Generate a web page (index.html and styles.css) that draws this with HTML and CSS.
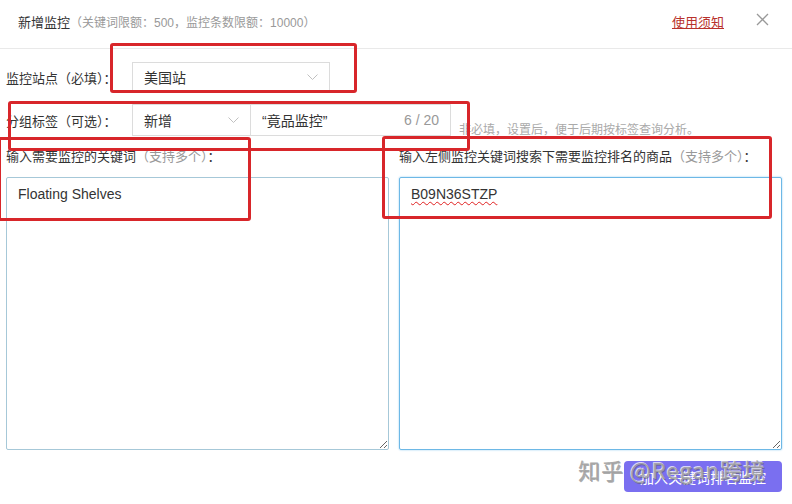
FILE: index.html
```html
<!DOCTYPE html>
<html lang="zh-CN">
<head>
    <meta charset="UTF-8">
    <title>新增监控</title>
    <link rel="stylesheet" href="styles.css">
</head>
<body>
    <div class="dialog">
        <!-- 标题栏 -->
        <div class="dialog-header">
            <div class="title">新增监控<span class="title-sub">（关键词限额：500，监控条数限额：10000）</span></div>
            <a class="notice-link" href="#">使用须知</a>
            <span class="close">
                <svg width="13" height="13" viewBox="0 0 13 13"><path d="M1 1L12 12M12 1L1 12" stroke="#999" stroke-width="1.3" fill="none"/></svg>
            </span>
        </div>

        <div class="dialog-body">
            <div class="form-row">
                <label class="form-label">监控站点（必填）：</label>
                <div class="select select-site">
                    <span>美国站</span>
                    <svg class="chevron" width="11" height="6" viewBox="0 0 11 6"><path d="M0.5 0.5L5.5 5.5L10.5 0.5" stroke="#c0c0c0" fill="none"/></svg>
                </div>
            </div>

            <div class="form-row row-tag">
                <label class="form-label">分组标签（可选）：</label>
                <div class="tag-group">
                    <div class="select select-tag">
                        <span>新增</span>
                        <svg class="chevron" width="11" height="6" viewBox="0 0 11 6"><path d="M0.5 0.5L5.5 5.5L10.5 0.5" stroke="#c0c0c0" fill="none"/></svg>
                    </div>
                    <div class="tag-input">
                        <span>“竟品监控”</span>
                        <span class="count">6 / 20</span>
                    </div>
                </div>
                <span class="hint">非必填，设置后，便于后期按标签查询分析。</span>
            </div>

            <div class="columns">
                <div class="column">
                    <div class="col-label">输入需要监控的关键词<span class="muted">（支持多个）</span>：</div>
                    <div class="text-box">Floating Shelves</div>
                </div>
                <div class="column">
                    <div class="col-label">输入左侧监控关键词搜索下需要监控排名的商品<span class="muted">（支持多个）</span>：</div>
                    <div class="text-box focused"><span class="spell">B09N36STZP</span></div>
                </div>
            </div>

            <div class="footer">
                <button class="btn-submit">加入关键词排名监控</button>
            </div>
        </div>

        <!-- 截图上的标注框和水印 -->
        <div class="mark mark-1"></div>
        <div class="mark mark-2"></div>
        <div class="mark mark-3"></div>
        <div class="mark mark-4"></div>
        <div class="watermark">知乎 @Regan跨境</div>
    </div>
</body>
</html>
```

FILE: styles.css
```css
body {
    margin: 0;
    background-color: #fff;
    font-family: "Liberation Sans", "Noto Sans CJK SC", sans-serif;
    color: #333;
}
.dialog {
    position: relative;
    width: 792px;
    height: 504px;
    overflow: hidden;
}
.dialog-header {
    display: flex;
    align-items: center;
    height: 43px;
    padding: 0 23px 5px 18px;
    border-bottom: 1px solid #e9e9e9;
}
.title {
    flex: 1;
    font-size: 13px;
    color: #333;
}
.title-sub {
    font-size: 12px;
    color: #999;
}
.notice-link {
    font-size: 13px;
    color: #b8322c;
    text-decoration: underline;
    margin-right: 32px;
}
.close {
    display: flex;
    margin-top: -4px;
}
.dialog-body {
    padding: 13px 10px 0 6px;
}
.form-row {
    display: flex;
    align-items: center;
    height: 30px;
}
.form-label {
    width: 126px;
    font-size: 13px;
    color: #333;
}
.select {
    display: flex;
    align-items: center;
    justify-content: space-between;
    box-sizing: border-box;
    height: 100%;
    padding: 0 11px;
    border: 1px solid #dcdcdc;
    font-size: 14px;
    color: #333;
}
.select-site {
    width: 198px;
}
.row-tag {
    margin-top: 12px;
    height: 32px;
}
.tag-group {
    display: flex;
    height: 100%;
}
.select-tag {
    width: 119px;
}
.tag-input {
    display: flex;
    align-items: center;
    justify-content: space-between;
    box-sizing: border-box;
    width: 200px;
    padding: 0 11px 0 11px;
    border: 1px solid #dcdcdc;
    border-left: none;
    font-size: 14px;
}
.count {
    font-size: 14px;
    color: #999;
}
.hint {
    align-self: flex-end;
    margin: 0 0 -1px 8px;
    font-size: 12px;
    color: #aaa;
}
.columns {
    display: flex;
    gap: 10px;
    margin-top: 12px;
}
.column {
    flex: 1;
}
.col-label {
    font-size: 13px;
    line-height: 18px;
    color: #333;
}
.muted {
    color: #999;
}
.text-box {
    box-sizing: border-box;
    height: 273px;
    margin-top: 11px;
    padding: 8px 11px;
    border: 1px solid #a6c8d8;
    border-radius: 2px;
    font-size: 14px;
    color: #333;
    overflow: hidden;
    resize: both;
}
.text-box.focused {
    border-color: #6db8e6;
    box-shadow: 0 0 2px #8ccbf0;
}
.spell {
    text-decoration: underline wavy #e02020;
    text-decoration-thickness: 1px;
    text-underline-offset: 2px;
}
.footer {
    display: flex;
    justify-content: flex-end;
    margin-top: 11px;
}
.btn-submit {
    height: 31px;
    width: 158px;
    padding: 0;
    border: none;
    border-radius: 4px;
    background-color: #7a6ff0;
    color: #fff;
    font-family: "Noto Sans CJK SC", sans-serif;
    font-size: 14px;
}
.mark {
    position: absolute;
    border: 3px solid #d8262a;
    border-radius: 3px;
}
.mark-1 { left: 110px; top: 43px; width: 241px; height: 44px; }
.mark-2 { left: 8px; top: 101px; width: 456px; height: 44px; }
.mark-3 { left: -2px; top: 137px; width: 247px; height: 78px; }
.mark-4 { left: 382px; top: 136px; width: 384px; height: 77px; }
.watermark {
    position: absolute;
    left: 578px;
    top: 453px;
    font-family: "Noto Sans CJK SC", sans-serif;
    font-size: 22px;
    letter-spacing: 1px;
    color: rgba(160, 160, 160, 0.9);
    text-shadow: -1px -1px 0 rgba(255, 255, 255, 0.7), 1px 1px 0 rgba(90, 90, 90, 0.5);
}
```
